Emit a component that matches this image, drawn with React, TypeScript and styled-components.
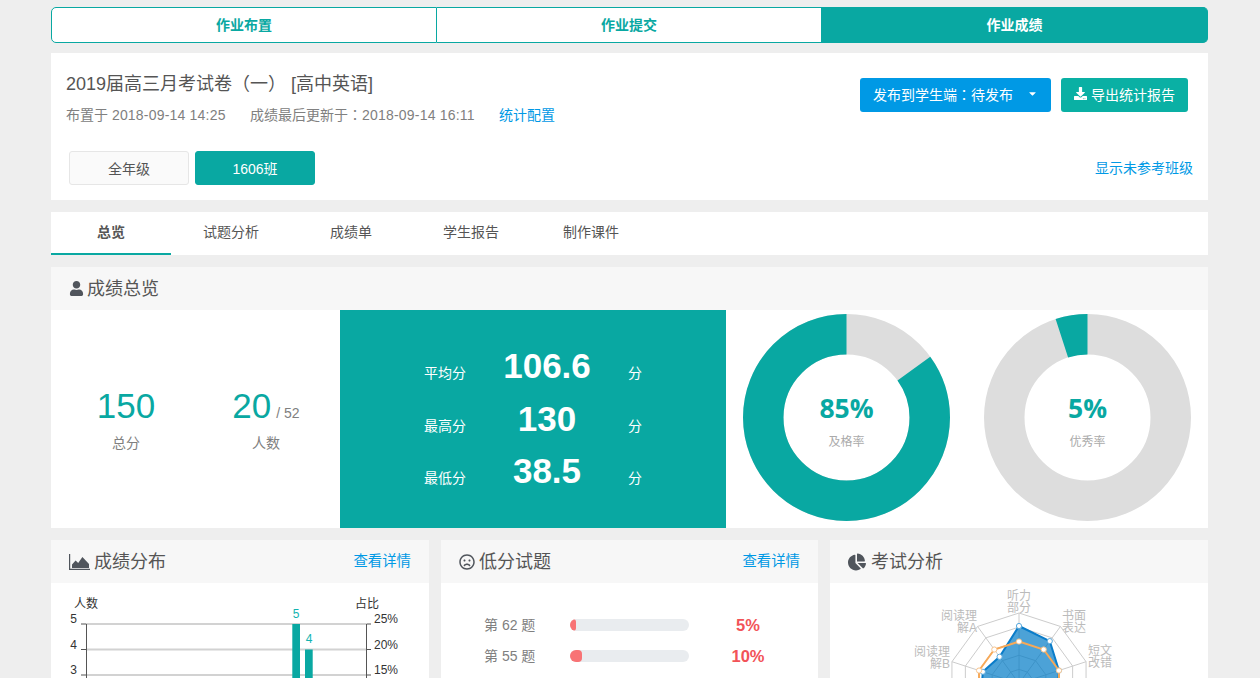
import React from "react";
import styled, { createGlobalStyle } from "styled-components";
import { FaCaretDown, FaChartPie, FaDownload, FaRegFrown, FaUser } from "react-icons/fa";

const TEAL = "#09a8a2";
const BLUE = "#0099e5";

const GlobalStyle = createGlobalStyle`
  html, body {
    margin: 0;
    height: 678px;
    overflow: hidden;
    background: #eeeeee;
    font-family: "Liberation Sans", "Noto Sans CJK SC", sans-serif;
    font-size: 14px;
    color: #555;
  }
`;

const Page = styled.div`
  width: 1157px;
  margin-left: 51px;
  padding-top: 7px;
  display: flex;
  flex-direction: column;
`;

const StepTabs = styled.div`
  display: grid;
  grid-template-columns: 386px 385px 386px;
  height: 36px;
  margin-bottom: 10px;
`;

const StepTab = styled.div<{ $active?: boolean }>`
  display: flex;
  align-items: center;
  justify-content: center;
  box-sizing: border-box;
  padding-bottom: 2px;
  font-weight: bold;
  color: ${(p) => (p.$active ? "#fff" : TEAL)};
  background: ${(p) => (p.$active ? TEAL : "#fff")};
  border: 1px solid ${TEAL};
  border-left-width: 0;

  &:first-child {
    border-left-width: 1px;
    border-radius: 5px 0 0 5px;
  }

  &:last-child {
    border-radius: 0 5px 5px 0;
  }
`;

const InfoCard = styled.div`
  background: #fff;
  height: 147px;
  box-sizing: border-box;
  padding: 19px 15px 0;
  margin-bottom: 12px;
`;

const InfoTop = styled.div`
  display: flex;
  justify-content: space-between;
  align-items: flex-start;
  height: 53px;
`;

const Title = styled.div`
  font-size: 18px;
  line-height: 24px;
  height: 24px;
  color: #555;
`;

const Punct = styled.span`
  font-family: "Noto Sans CJK TC", sans-serif;
  line-height: 1;
`;

const Meta = styled.div`
  margin-top: 9px;
  height: 20px;
  line-height: 20px;
  color: #808080;
  display: flex;
`;

const MetaItem = styled.span<{ $width: number }>`
  width: ${(p) => p.$width}px;
`;

const Stamp = styled.span`
  letter-spacing: 0.2px;
`;

const Link = styled.a`
  color: ${BLUE};
  cursor: pointer;
`;

const DetailLink = styled(Link)`
  font-size: 14.4px;
`;

const Actions = styled.div`
  display: flex;
  gap: 10px;
  margin: 6px 5px 0 0;
`;

const ActionButton = styled.button<{ $color: string }>`
  display: flex;
  align-items: center;
  height: 34px;
  padding: 0 13px 3px;
  border: 0;
  border-radius: 3px;
  background: ${(p) => p.$color};
  color: #fff;
  font: inherit;
`;

const Caret = styled(FaCaretDown)`
  margin-left: 14px;
  width: 11px;
  height: 11px;
`;

const ExportIcon = styled(FaDownload)`
  margin-right: 4px;
  width: 13px;
  height: 13px;
`;

const ClassRow = styled.div`
  display: flex;
  align-items: center;
  margin: 26px 0 0 3px;
`;

const ClassButton = styled.div<{ $active?: boolean }>`
  width: 120px;
  height: 34px;
  box-sizing: border-box;
  margin-right: 6px;
  padding-bottom: 1px;
  display: flex;
  align-items: center;
  justify-content: center;
  border-radius: 3px;
  border: 1px solid ${(p) => (p.$active ? TEAL : "#e6e6e6")};
  background: ${(p) => (p.$active ? TEAL : "#fafafa")};
  color: ${(p) => (p.$active ? "#fff" : "#555")};
`;

const MissingLink = styled(Link)`
  margin: 0 0 2px auto;
`;

const SubTabs = styled.div`
  display: flex;
  height: 43px;
  background: #fff;
  margin-bottom: 12px;
`;

const SubTab = styled.div<{ $active?: boolean }>`
  width: 120px;
  box-sizing: border-box;
  padding-bottom: 3px;
  display: flex;
  align-items: center;
  justify-content: center;
  font-weight: ${(p) => (p.$active ? "bold" : "normal")};
  border-bottom: 2px solid ${(p) => (p.$active ? TEAL : "transparent")};
`;

const Panel = styled.section`
  background: #fff;
`;

const PanelHead = styled.header`
  height: 43px;
  box-sizing: border-box;
  background: #f7f7f7;
  padding: 0 18px 4px;
  display: flex;
  align-items: center;
  justify-content: space-between;
`;

const PanelTitle = styled.div<{ $icon: number; $gap?: number }>`
  display: flex;
  align-items: center;
  gap: ${(p) => p.$gap ?? 4}px;
  font-size: 18px;
  color: #555;

  svg {
    width: ${(p) => p.$icon}px;
    height: ${(p) => p.$icon}px;
    color: #50555c;
    position: relative;
    top: 2px;
  }
`;

const OverviewBody = styled.div`
  display: grid;
  grid-template-columns: 289px 386px 241px 241px;
  height: 218px;
`;

const Totals = styled.div`
  display: grid;
  grid-template-columns: 140px 140px;
  padding: 1px 0 0 5px;
  align-items: center;
`;

const Total = styled.div`
  text-align: center;
`;

const TotalValue = styled.div`
  font-size: 35px;
  line-height: 40px;
  color: ${TEAL};

  small {
    font-size: 14px;
    line-height: 1;
    color: #808080;
    margin-left: 5px;
  }
`;

const TotalLabel = styled.div`
  margin-top: 7px;
  line-height: 20px;
  color: #808080;
`;

const Scores = styled.div`
  background: ${TEAL};
  color: #fff;
  display: grid;
  grid-template-columns: 42px 162px 14px;
  grid-auto-rows: 52.5px;
  align-content: center;
  justify-content: center;
  align-items: baseline;
`;

const ScoreValue = styled.div`
  font-size: 35px;
  line-height: 52px;
  font-weight: bold;
  text-align: center;
`;

const DonutCell = styled.div`
  position: relative;
  display: flex;
  justify-content: center;
  padding-top: 4px;
`;

const DonutCenter = styled.div`
  position: absolute;
  left: 0;
  right: 0;
  top: 79px;
  text-align: center;
`;

const DonutValue = styled.div`
  font-family: "Open Sans", sans-serif;
  font-size: 26.5px;
  line-height: 38px;
  font-weight: bold;
  color: ${TEAL};
`;

const DonutLabel = styled.div`
  font-size: 12px;
  line-height: 18px;
  margin-top: 6px;
  color: #aaa;
`;

const BottomGrid = styled.div`
  display: grid;
  grid-template-columns: 378px 377px 378px;
  gap: 12px;
  margin-top: 12px;
`;

const TallPanel = styled(Panel)`
  height: 300px;
`;

const LowList = styled.div`
  padding: 26px 0 0 43px;
`;

const LowRow = styled.div`
  display: grid;
  grid-template-columns: 86px 119px 118px;
  height: 31px;
  align-items: center;
`;

const LowLabel = styled.span`
  color: #808080;
  margin-bottom: 2px;
`;

const Track = styled.div`
  height: 12px;
  border-radius: 6px;
  background: #e9ecef;
  overflow: hidden;
`;

const Fill = styled.div`
  height: 100%;
  border-radius: 4px;
  background: #f87375;
`;

const LowPercent = styled.span`
  text-align: center;
  font-size: 16.5px;
  font-weight: bold;
  color: #f25358;
  padding-top: 2px;
`;

const ChartSvg = styled.svg`
  display: block;
  font-family: "Liberation Sans", "Noto Sans CJK SC", sans-serif;
  font-size: 12px;
`;

function AreaIcon() {
  return (
    <svg style={{ width: 21, height: 16 }} viewBox="0 0 21 16" fill="currentColor">
      <path d="M0 0h1.2v14.8H21V16H0z" />
      <path d="M3 14v-3.5l3.6-4 2.6 2.4L13.4 3l6.6 7v4z" />
    </svg>
  );
}

function Donut({ value, start, label }: { value: number; start: number; label: string }) {
  return (
    <DonutCell>
      <svg width="207" height="207" viewBox="0 0 207 207">
        <g transform="rotate(-90 103.5 103.5)" fill="none" strokeWidth="40.5">
          <circle cx="103.5" cy="103.5" r="83.25" stroke="#dddddd" />
          <circle
            cx="103.5"
            cy="103.5"
            r="83.25"
            stroke={TEAL}
            pathLength={100}
            strokeDasharray={`${value} 100`}
            strokeDashoffset={-start}
          />
        </g>
      </svg>
      <DonutCenter>
        <DonutValue>{value}%</DonutValue>
        <DonutLabel>{label}</DonutLabel>
      </DonutCenter>
    </DonutCell>
  );
}

const GRID_Y = [41, 66.5, 92];

function DistributionChart() {
  const ticks = ["5", "4", "3"];
  const rates = ["25%", "20%", "15%"];
  return (
    <ChartSvg width="378" height="120" viewBox="0 0 378 120">
      <text x="23" y="25" fill="#333">人数</text>
      <text x="304" y="25" fill="#333">占比</text>
      {GRID_Y.map((y, i) => (
        <g key={y}>
          <line x1="35" x2="315" y1={y} y2={y} stroke="#d2d2d2" strokeWidth="2" />
          <line x1="30" x2="35" y1={y} y2={y} stroke="#555" />
          <line x1="315.5" x2="320" y1={y} y2={y} stroke="#555" />
          <text x="26" y={y - 1} textAnchor="end" fill="#333">{ticks[i]}</text>
          <text x="323" y={y - 1} fill="#333">{rates[i]}</text>
        </g>
      ))}
      <line x1="35.5" x2="35.5" y1="41" y2="120" stroke="#555" />
      <line x1="315.5" x2="315.5" y1="41" y2="120" stroke="#555" />
      <rect x="241.3" y="41" width="7.7" height="79" fill={TEAL} />
      <rect x="254" y="66.5" width="7.7" height="54" fill={TEAL} />
      <text x="245" y="35" textAnchor="middle" fill="#12b3b0">5</text>
      <text x="258" y="60" textAnchor="middle" fill="#12b3b0">4</text>
    </ChartSvg>
  );
}

const CX = 189;
const CY = 100.5;
const R = 70.5;
const BLUE_VALUES = [57.5, 52.4, 42, 40, 45, 40, 40, 40, 38, 33];
const ORANGE_VALUES = [42, 42, 42, 42, 42, 42, 42, 42, 42, 42];

function polar(index: number, radius: number) {
  const a = (index * Math.PI) / 5;
  return [CX + radius * Math.sin(a), CY - radius * Math.cos(a)];
}

function ring(values: number[]) {
  return values.map((v, i) => polar(i, v).join(",")).join(" ");
}

const RADAR_LABELS = [
  { x: 189, y: 17, anchor: "middle", lines: ["听力", "部分"] },
  { x: 232, y: 37, anchor: "start", lines: ["书面", "表达"] },
  { x: 258, y: 72, anchor: "start", lines: ["短文", "改错"] },
  { x: 147, y: 37, anchor: "end", lines: ["阅读理", "解A"] },
  { x: 120, y: 73, anchor: "end", lines: ["阅读理", "解B"] },
];

function RadarChart() {
  return (
    <ChartSvg width="378" height="200" viewBox="0 0 378 200">
      {RADAR_LABELS.map((l) => (
        <text key={l.lines[0] + l.x} x={l.x} y={l.y} textAnchor={l.anchor} fill="#bbbbbb">
          {l.lines.map((line, i) => (
            <tspan key={line} x={l.x} dy={i ? 12 : 0}>{line}</tspan>
          ))}
        </text>
      ))}
      {[1, 0.8, 0.6, 0.4, 0.2].map((k) => (
        <polygon key={k} points={ring(Array(10).fill(R * k))} fill="none" stroke="#cccccc" />
      ))}
      {BLUE_VALUES.map((_, i) => {
        const [x, y] = polar(i, R);
        return <line key={i} x1={CX} y1={CY} x2={x} y2={y} stroke="#cccccc" />;
      })}
      <polygon
        points={ring(BLUE_VALUES)}
        fill="rgba(0,122,198,0.7)"
        stroke="#0a7cc9"
        strokeWidth="2"
      />
      <polygon points={ring(ORANGE_VALUES)} fill="none" stroke="#f7a958" strokeWidth="2" />
      {BLUE_VALUES.map((v, i) => {
        const [x, y] = polar(i, v);
        return <circle key={i} cx={x} cy={y} r="2.6" fill="#fff" stroke="#5aa9dc" />;
      })}
      {ORANGE_VALUES.map((v, i) => {
        const [x, y] = polar(i, v);
        return <circle key={i} cx={x} cy={y} r="2.6" fill="#fff" stroke="#f9c48c" />;
      })}
    </ChartSvg>
  );
}

export default function App() {
  return (
    <Page>
      <GlobalStyle />
      <StepTabs>
        <StepTab>作业布置</StepTab>
        <StepTab>作业提交</StepTab>
        <StepTab $active>作业成绩</StepTab>
      </StepTabs>

      <InfoCard>
        <InfoTop>
          <div>
            <Title>
              2019届高三月考试卷<Punct>（一）</Punct> [高中英语]
            </Title>
            <Meta>
              <MetaItem $width={184}>
                布置于 <Stamp>2018-09-14 14:25</Stamp>
              </MetaItem>
              <MetaItem $width={249}>
                成绩最后更新于<Punct>：</Punct>
                <Stamp>2018-09-14 16:11</Stamp>
              </MetaItem>
              <Link>统计配置</Link>
            </Meta>
          </div>
          <Actions>
            <ActionButton $color={BLUE}>
              <span>
                发布到学生端<Punct>：</Punct>待发布
              </span>
              <Caret />
            </ActionButton>
            <ActionButton $color="#0ab0a4">
              <ExportIcon />
              导出统计报告
            </ActionButton>
          </Actions>
        </InfoTop>
        <ClassRow>
          <ClassButton>全年级</ClassButton>
          <ClassButton $active>1606班</ClassButton>
          <MissingLink>显示未参考班级</MissingLink>
        </ClassRow>
      </InfoCard>

      <SubTabs>
        <SubTab $active>总览</SubTab>
        <SubTab>试题分析</SubTab>
        <SubTab>成绩单</SubTab>
        <SubTab>学生报告</SubTab>
        <SubTab>制作课件</SubTab>
      </SubTabs>

      <Panel>
        <PanelHead>
          <PanelTitle $icon={15} $gap={3}>
            <FaUser />
            成绩总览
          </PanelTitle>
        </PanelHead>
        <OverviewBody>
          <Totals>
            <Total>
              <TotalValue>150</TotalValue>
              <TotalLabel>总分</TotalLabel>
            </Total>
            <Total>
              <TotalValue>
                20<small>/ 52</small>
              </TotalValue>
              <TotalLabel>人数</TotalLabel>
            </Total>
          </Totals>
          <Scores>
            <span>平均分</span>
            <ScoreValue>106.6</ScoreValue>
            <span>分</span>
            <span>最高分</span>
            <ScoreValue>130</ScoreValue>
            <span>分</span>
            <span>最低分</span>
            <ScoreValue>38.5</ScoreValue>
            <span>分</span>
          </Scores>
          <Donut value={85} start={15} label="及格率" />
          <Donut value={5} start={95} label="优秀率" />
        </OverviewBody>
      </Panel>

      <BottomGrid>
        <TallPanel>
          <PanelHead>
            <PanelTitle $icon={16}>
              <AreaIcon />
              成绩分布
            </PanelTitle>
            <DetailLink>查看详情</DetailLink>
          </PanelHead>
          <DistributionChart />
        </TallPanel>
        <TallPanel>
          <PanelHead>
            <PanelTitle $icon={16}>
              <FaRegFrown />
              低分试题
            </PanelTitle>
            <DetailLink>查看详情</DetailLink>
          </PanelHead>
          <LowList>
            <LowRow>
              <LowLabel>第 62 题</LowLabel>
              <Track>
                <Fill style={{ width: "5%" }} />
              </Track>
              <LowPercent>5%</LowPercent>
            </LowRow>
            <LowRow>
              <LowLabel>第 55 题</LowLabel>
              <Track>
                <Fill style={{ width: "10%" }} />
              </Track>
              <LowPercent>10%</LowPercent>
            </LowRow>
          </LowList>
        </TallPanel>
        <TallPanel>
          <PanelHead>
            <PanelTitle $icon={18} $gap={5}>
              <FaChartPie />
              考试分析
            </PanelTitle>
          </PanelHead>
          <RadarChart />
        </TallPanel>
      </BottomGrid>
    </Page>
  );
}
